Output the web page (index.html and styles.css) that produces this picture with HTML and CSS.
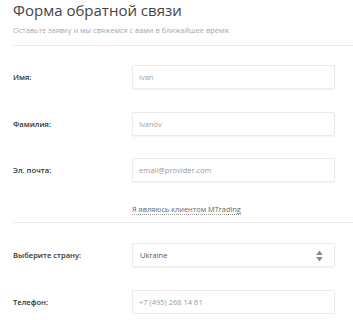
FILE: index.html
```html
<!DOCTYPE html>
<html lang="ru">
<head>
<meta charset="utf-8">
<title>Форма обратной связи</title>
<link rel="stylesheet" href="styles.css">
</head>
<body>
<div class="page">
  <h1 class="title">Форма обратной связи</h1>
  <p class="subtitle">Оставьте заявку и мы свяжемся с вами в ближайшее время.</p>
  <div class="divider"></div>
  <div class="form">
    <div class="row row-first">
      <label class="label">Имя:</label>
      <input class="field" type="text" value="ivan">
    </div>
    <div class="row row-second">
      <label class="label">Фамилия:</label>
      <input class="field" type="text" value="Ivanov">
    </div>
    <div class="row row-third">
      <label class="label">Эл. почта:</label>
      <input class="field" type="text" placeholder="email@provider.com">
    </div>
    <div class="link-row">
      <span class="client-link">Я являюсь клиентом MTrading</span>
    </div>
  </div>
  <div class="divider divider-2"></div>
  <div class="form">
    <div class="row row-select">
      <label class="label">Выберите страну:</label>
      <div class="field select">
        <span class="select-value">Ukraine</span>
        <svg class="select-arrow" width="7" height="12" viewBox="0 0 7 12"><path d="M3.5 0.5 L6.8 5 L0.2 5 Z" fill="#8a8a8a"/><path d="M0.2 7 L6.8 7 L3.5 11.5 Z" fill="#8a8a8a"/></svg>
      </div>
    </div>
    <div class="row row-phone">
      <label class="label">Телефон:</label>
      <input class="field" type="text" placeholder="+7 (495) 268 14 61">
    </div>
  </div>
</div>
</body>
</html>
```
FILE: styles.css
```css
html, body {
  margin: 0;
  padding: 0;
  background: #ffffff;
}
body {
  font-family: "Open Sans", "Noto Sans", sans-serif;
  overflow: hidden;
}
.page {
  padding-left: 13px;
  padding-top: 0;
}
.title {
  margin: 0;
  font-size: 15px;
  font-weight: 400;
  color: #444444;
  line-height: 20px;
}
.subtitle {
  margin: 4px 0 0 0;
  font-size: 7.4px;
  line-height: 12px;
  color: #a8a8a8;
}
.divider {
  margin-top: 9px;
  border-top: 1px solid #ececec;
}
.form {
  display: flex;
  flex-direction: column;
}
.row {
  display: flex;
  align-items: center;
  height: 24px;
}
.row-first { margin-top: 19px; }
.row-second { margin-top: 23px; }
.row-third { margin-top: 22px; }
.label {
  width: 119px;
  flex: none;
  font-size: 7.6px;
  font-weight: 600;
  color: #333333;
}
.field {
  box-sizing: border-box;
  width: 203px;
  height: 24px;
  margin: 0;
  border: 1px solid #ebebeb;
  border-radius: 1px;
  box-shadow: 0 1px 2px rgba(0, 0, 0, 0.05);
  padding: 0 0 0 6px;
  font-family: "Open Sans", "Noto Sans", sans-serif;
  font-size: 7.5px;
  color: #a0a0a0;
  background: #ffffff;
  outline: none;
}
.field::placeholder {
  color: #9a9a9a;
  opacity: 1;
}
.link-row {
  margin-top: 22px;
  padding-left: 119px;
  font-size: 7.4px;
  line-height: 11px;
  height: 11px;
}
.client-link {
  color: #666666;
  border-bottom: 1px dotted #9a9a9a;
}
.divider-2 {
  margin-top: 7px;
}
.row-select { margin-top: 20px; }
.row-phone { margin-top: 23px; }
.select {
  position: relative;
  display: flex;
  align-items: center;
  padding-left: 7px;
}
.select-value {
  color: #555555;
}
.select-arrow {
  position: absolute;
  right: 11px;
  top: 5.5px;
}
```
